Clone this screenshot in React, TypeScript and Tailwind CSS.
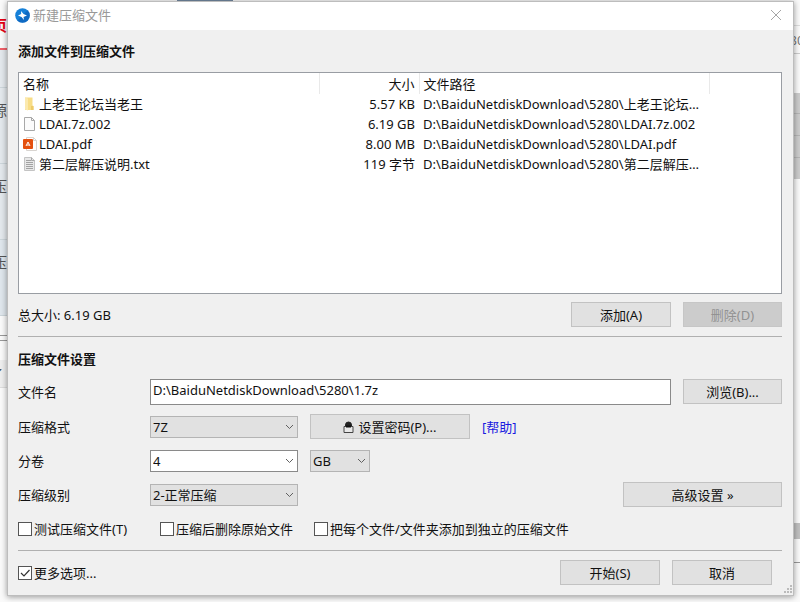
import { useState } from 'react';
import type { ReactNode } from 'react';

const rows = [
  {
    icon: 'folder',
    name: '上老王论坛当老王',
    size: '5.57 KB',
    path: 'D:\\BaiduNetdiskDownload\\5280\\上老王论坛当老王',
  },
  {
    icon: 'file',
    name: 'LDAI.7z.002',
    size: '6.19 GB',
    path: 'D:\\BaiduNetdiskDownload\\5280\\LDAI.7z.002',
  },
  {
    icon: 'pdf',
    name: 'LDAI.pdf',
    size: '8.00 MB',
    path: 'D:\\BaiduNetdiskDownload\\5280\\LDAI.pdf',
  },
  {
    icon: 'text',
    name: '第二层解压说明.txt',
    size: '119 字节',
    path: 'D:\\BaiduNetdiskDownload\\5280\\第二层解压说明.txt',
  },
];

function FileIcon({ type }: { type: string }) {
  if (type === 'folder') {
    return (
      <svg width="16" height="16" viewBox="0 0 16 16" className="shrink-0">
        <path d="M2 1.500h7.500v8l1 .5v4H2z" fill="#f8dd87" />
        <path d="M2 1.500l3 1v12l-3-1z" fill="#fbe9ae" />
        <path d="M8 10h2.500v4H8z" fill="#eecb6a" />
      </svg>
    );
  }
  if (type === 'pdf') {
    return (
      <svg width="16" height="16" viewBox="0 0 16 16" className="shrink-0">
        <path d="M3.500 1.500h7l3 3v10h-10z" fill="#fff" stroke="#d8d4d0" />
        <path d="M10.500 1.500v3h3" fill="none" stroke="#d8d4d0" />
        <rect x="0" y="3" width="10" height="10" rx="1" fill="#e4500f" />
        <path d="M3 10l2-4 2 4M4 9h2" fill="none" stroke="#fff" />
      </svg>
    );
  }
  return (
    <svg width="16" height="16" viewBox="0 0 16 16" className="shrink-0">
      <path
        d="M1.500 1.500h7l3 3v10h-10z"
        fill={type === 'text' ? '#e8e8e8' : '#fbfbfb'}
        stroke={type === 'text' ? '#c4c4c4' : '#a8a8a8'}
      />
      <path d="M8.500 1.500v3h3" fill="none" stroke="#a8a8a8" />
      {type === 'text' && (
        <path d="M3 4.500h5M3 6.500h7M3 8.500h7M3 10.500h7M3 12.500h7" stroke="#a3a3a3" />
      )}
    </svg>
  );
}

function Button({
  className,
  disabled,
  children,
}: {
  className: string;
  disabled?: boolean;
  children: ReactNode;
}) {
  return (
    <button
      type="button"
      disabled={disabled}
      className={`flex h-[25px] items-center justify-center gap-1 border border-[#c2c2c2] bg-[#e1e1e1] disabled:border-[#c6c6c6] disabled:bg-[#cccccc] disabled:text-[#929292] ${className}`}
    >
      {children}
    </button>
  );
}

function Select({
  id,
  label,
  options,
  className,
}: {
  id: string;
  label?: string;
  options: string[];
  className: string;
}) {
  return (
    <div className={`relative ${className}`}>
      <select
        id={id}
        aria-label={label}
        className="block h-[22px] w-full appearance-none border border-inherit bg-transparent pl-[2px] leading-5"
      >
        {options.map((option) => (
          <option key={option}>{option}</option>
        ))}
      </select>
      <svg
        width="9"
        height="6"
        viewBox="0 0 9 6"
        className="pointer-events-none absolute top-2 right-1"
      >
        <path d="M1 1l3.500 3.500L8 1" fill="none" stroke="#606060" />
      </svg>
    </div>
  );
}

function Check({
  id,
  label,
  defaultChecked,
}: {
  id: string;
  label: string;
  defaultChecked?: boolean;
}) {
  const [checked, setChecked] = useState(!!defaultChecked);
  return (
    <div className="flex items-center gap-[2px]">
      <div className="relative h-[14px] w-[14px] shrink-0">
        <input
          id={id}
          type="checkbox"
          checked={checked}
          onChange={(e) => setChecked(e.target.checked)}
          className="block h-[14px] w-[14px] appearance-none border border-[#555555] bg-white"
        />
        {checked && (
          <svg
            width="14"
            height="14"
            viewBox="0 0 14 14"
            className="pointer-events-none absolute inset-0"
          >
            <path d="M3 7l3 3 5.500-6" fill="none" stroke="#333" strokeWidth="1.200" />
          </svg>
        )}
      </div>
      <label htmlFor={id}>{label}</label>
    </div>
  );
}

function TitleBar() {
  return (
    <div className="flex h-7 items-center bg-white pr-[11px] pb-[2px] pl-[7px]">
      <svg width="15" height="15" viewBox="0 0 15 15">
        <circle cx="7.500" cy="7.500" r="7.300" fill="#1680d8" />
        <path d="M12.700 2.300a7.300 7.300 0 0 1-10.400 10.400z" fill="#0b5cb5" opacity=".6" />
        <path d="M6 3l2.500 3 3.500 1.500L8.500 9 9 12 6.500 9 3 7.500 6.200 6z" fill="#fff" />
      </svg>
      <h1 className="ml-[3px] flex-1 text-[#999999]">新建压缩文件</h1>
      <button type="button" aria-label="关闭">
        <svg width="12" height="12" viewBox="0 0 12 12">
          <path d="M1 1l10 10M11 1L1 11" fill="none" stroke="#a5a5a5" />
        </svg>
      </button>
    </div>
  );
}

function FileTable() {
  return (
    <div className="mt-[11px] h-[222px] border border-[#999da3] bg-white">
      <table className="w-full table-fixed">
        <thead>
          <tr className="h-[21px] text-left">
            <th className="w-[300px] border-r border-[#e9e9e9] pl-1 font-normal">名称</th>
            <th className="w-[100px] border-r border-[#e9e9e9] pr-1 text-right font-normal">大小</th>
            <th className="w-[290px] border-r border-[#e9e9e9] pl-1 font-normal">文件路径</th>
            <td />
          </tr>
        </thead>
        <tbody>
          {rows.map((row) => (
            <tr key={row.name} className="h-5">
              <td>
                <div className="flex items-center pl-1">
                  <FileIcon type={row.icon} />
                  {row.name}
                </div>
              </td>
              <td className="pr-1 text-right">{row.size}</td>
              <td className="truncate pr-2 pl-1">{row.path}</td>
              <td />
            </tr>
          ))}
        </tbody>
      </table>
    </div>
  );
}

function Settings() {
  return (
    <div className="mt-[10px] grid grid-cols-[132px_1fr] gap-y-[9px]">
      <label htmlFor="name" className="self-center">
        文件名
      </label>
      <div className="flex gap-3">
        <input
          id="name"
          defaultValue="D:\BaiduNetdiskDownload\5280\1.7z"
          className="h-[26px] min-w-0 flex-1 border border-[#8a8a8a] bg-white px-[2px] pb-1"
        />
        <Button className="w-[99px]">浏览(B)...</Button>
      </div>

      <label htmlFor="format" className="self-center">
        压缩格式
      </label>
      <div className="flex items-center gap-3">
        <Select
          id="format"
          options={['7Z', 'ZIP', 'TAR']}
          className="w-[148px] border-[#b4b4b4] bg-[#e1e1e1]"
        />
        <Button className="w-[160px]">
          <svg width="11" height="12" viewBox="0 0 11 12">
            <path d="M2.500 5.500V4a3 3 0 0 1 6 0v1.500z" fill="#222" stroke="#222" />
            <path d="M1 5.500h9v6H1z" fill="#e8e8e8" stroke="#444" />
            <path d="M3 5.500h5" stroke="#111" strokeWidth="2" />
          </svg>
          设置密码(P)...
        </Button>
        <a href="#help" className="text-[#1a1ae0]">
          [帮助]
        </a>
      </div>

      <label htmlFor="volume" className="self-center">
        分卷
      </label>
      <div className="flex h-[25px] items-center gap-3">
        <Select id="volume" options={['4', '8']} className="w-[148px] border-[#8a8a8a] bg-white" />
        <Select
          id="unit"
          label="分卷单位"
          options={['GB', 'MB', 'KB']}
          className="w-[60px] border-[#b4b4b4] bg-[#e1e1e1]"
        />
      </div>

      <label htmlFor="level" className="self-center">
        压缩级别
      </label>
      <div className="flex items-center justify-between">
        <Select
          id="level"
          options={['2-正常压缩', '1-快速压缩']}
          className="w-[148px] border-[#b4b4b4] bg-[#e1e1e1]"
        />
        <Button className="w-[159px]">高级设置 »</Button>
      </div>
    </div>
  );
}

// slivers of the windows that show behind the dialog
function LeftEdge() {
  return (
    <div className="flex w-[7px] flex-col overflow-hidden bg-[#fafafa] text-[#555555]">
      <div className="flex h-[49px] items-center justify-end border-b-2 border-[#f0616a] text-[15px] font-bold text-[#e60012]">
        页
      </div>
      <div className="h-[38px] border-b border-[#ccd5da] bg-[#e3e8ec]" />
      <div className="flex h-[76px] items-start justify-end border-b border-[#ccd5da] bg-[#e3e8ec] pt-3 text-[15px]">
        源
      </div>
      <div className="flex h-[76px] items-start justify-end border-b border-[#ccd5da] bg-[#e3e8ec] pt-3 text-[15px]">
        压
      </div>
      <div className="flex h-[76px] items-start justify-end border-b border-[#ccd5da] bg-[#dfe6ec] pt-3 text-[15px]">
        压
      </div>
      <div className="h-5 border-b border-[#999999]" />
      <div className="mt-1 h-5 border-t border-[#999999]" />
      <div className="flex h-7 items-center justify-end border-b border-[#dddddd] bg-[#eeeeee] pr-1">
        了
      </div>
    </div>
  );
}

function RightEdge() {
  return (
    <div className="flex w-[6px] flex-col overflow-hidden bg-[#fafafa]">
      <div className="h-[25px] border-b border-[#dddddd]" />
      <div className="flex h-7 items-center justify-center border-b border-[#cccccc] text-[#777777]">
        80
      </div>
      <div className="h-[39px]" />
      <div className="h-[21px] border-b border-[#b5b5b5] bg-[#cccccc]" />
      <div className="h-[22px] border-b border-[#b5b5b5] bg-[#cccccc]" />
      <div className="h-[22px] border-b border-[#b5b5b5] bg-[#cccccc]" />
      <div className="h-[21px] bg-[#cccccc]" />
      <div className="h-[344px]" />
      <div className="h-4 bg-[#c0c0c0]" />
      <div className="h-6 border-b border-[#999999]" />
    </div>
  );
}

export default function App() {
  return (
    <div className="flex min-h-screen flex-col bg-[#fafafa] font-['Noto_Sans','Noto_Sans_CJK_SC',sans-serif] text-[13px] leading-5 text-[#111111]">
      <div className="h-px pl-[177px]">
        <div className="h-px w-14 bg-[#7288a0]" />
      </div>
      <div className="flex flex-1">
        <LeftEdge />
        <main className="relative mb-[6px] min-w-0 flex-1 border border-[#bdbdbd] bg-[#f0f0f0] shadow-[0_1px_6px_#00000066]">
          <TitleBar />
          <div className="pt-[11px] pr-[11px] pl-[10px]">
            <h2 className="font-bold">添加文件到压缩文件</h2>
            <FileTable />
            <div className="mt-2 flex items-center gap-3">
              <p className="flex-1">总大小: 6.19 GB</p>
              <Button className="w-[100px]">添加(A)</Button>
              <Button className="w-[99px]" disabled>
                删除(D)
              </Button>
            </div>
            <hr className="mt-[9px] border-[#b0b0b0]" />

            <h2 className="mt-3 font-bold">压缩文件设置</h2>
            <Settings />
            <div className="mt-3 grid grid-cols-[142px_154px_1fr]">
              <Check id="test" label="测试压缩文件(T)" />
              <Check id="remove" label="压缩后删除原始文件" />
              <Check id="separate" label="把每个文件/文件夹添加到独立的压缩文件" />
            </div>
            <hr className="mt-[11px] border-[#b0b0b0]" />
            <div className="mt-[9px] mb-[9px] flex items-center gap-3 pr-[10px]">
              <div className="flex-1">
                <Check id="more" label="更多选项..." defaultChecked />
              </div>
              <Button className="w-[100px]">开始(S)</Button>
              <Button className="w-[100px]">取消</Button>
            </div>
          </div>
          <svg width="9" height="9" viewBox="0 0 9 9" className="absolute right-[1px] bottom-[1px]">
            <path d="M7 1h2M4 4h2M7 4h2M1 7h2M4 7h2M7 7h2" stroke="#bbb" strokeWidth="2" />
          </svg>
        </main>
        <RightEdge />
      </div>
    </div>
  );
}
